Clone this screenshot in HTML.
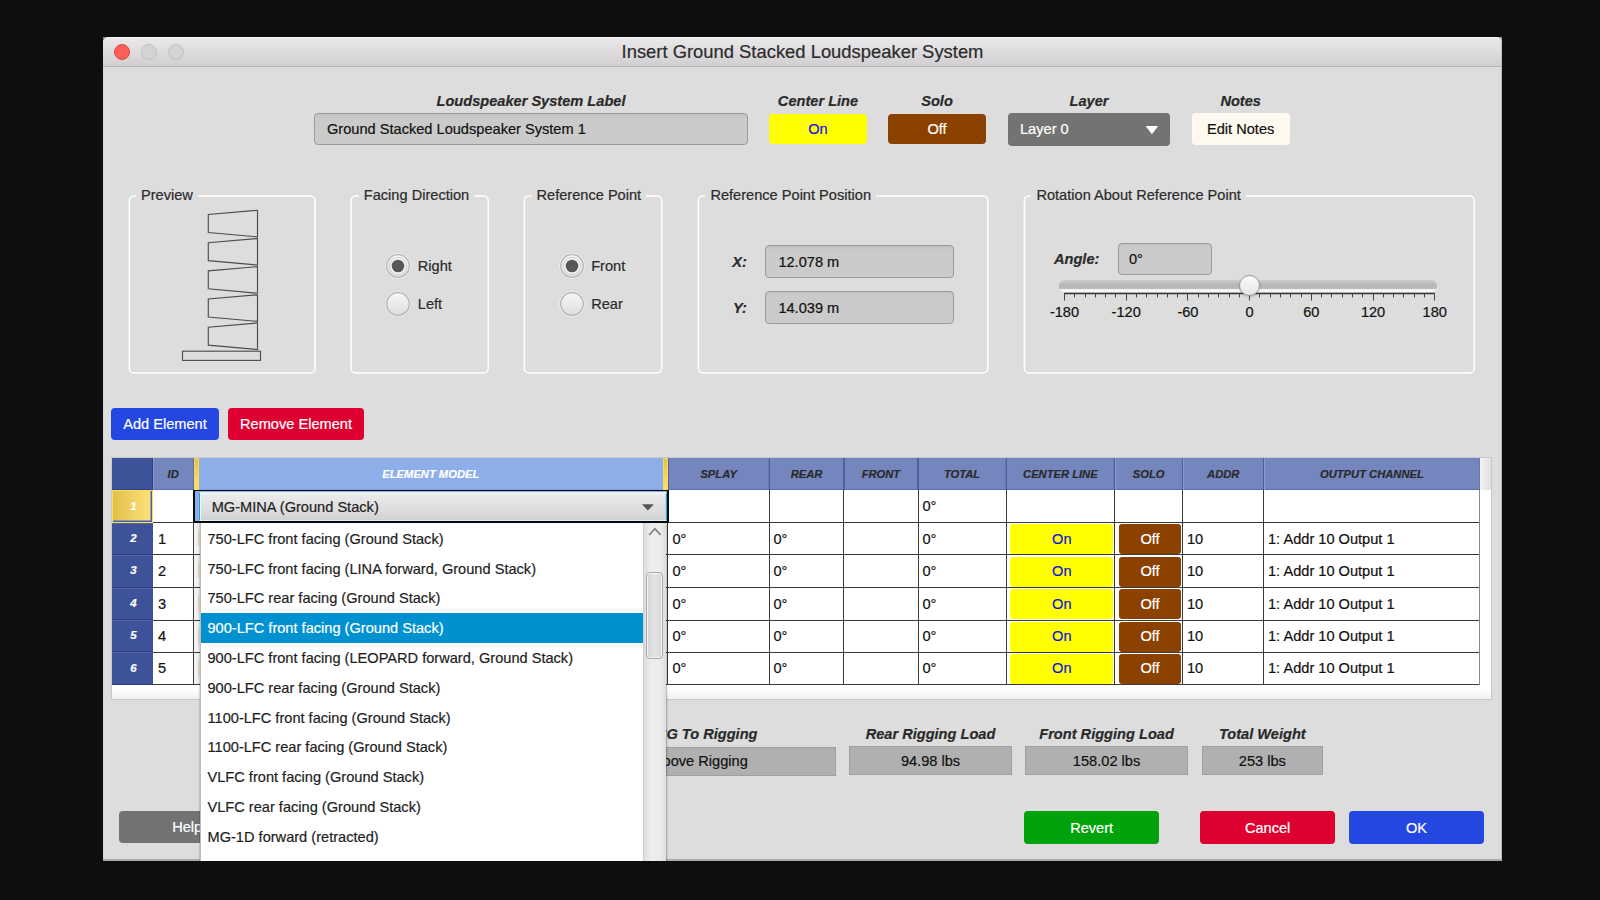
<!DOCTYPE html>
<html><head><meta charset="utf-8"><title>Insert Ground Stacked Loudspeaker System</title>
<style>
html,body{margin:0;padding:0;}
body{width:1600px;height:900px;background:#0e0e0e;position:relative;overflow:hidden;font-family:"Liberation Sans",sans-serif;color:#1a1a1a;}
.a{position:absolute;box-sizing:border-box;}
.t{line-height:1;white-space:pre;-webkit-text-stroke:0.2px currentColor;}
.bi{font-weight:bold;font-style:italic;color:#2a2a2a;}
</style></head><body>
<div class="a" style="left:1494px;top:37px;width:8px;height:8px;background:#9a9a9a;"></div>
<div class="a" style="left:103px;top:37px;width:8px;height:8px;background:#8a8a8a;"></div>
<div class="a" style="left:103px;top:37px;width:1399px;height:824px;background:#dddddd;border-radius:6px 6px 0 0;box-shadow:inset -1px 0 0 #b9b9b9, inset 0 -2px 1px #a9a9a9;"></div>
<div class="a" style="left:103px;top:37px;width:1399px;height:30px;background:linear-gradient(#ebe9eb,#d1cfd1);border-radius:6px 6px 0 0;border-bottom:1px solid #b3b3b3;box-shadow:inset 0 1px 0 #f4f3f4, inset -1px 0 0 #c0bfc0;"></div>
<div class="a" style="left:114px;top:44px;width:16px;height:16px;border-radius:50%;background:#fe5f57;border:1px solid #e0443e;"></div>
<div class="a" style="left:141px;top:44px;width:16px;height:16px;border-radius:50%;background:#d3d3d3;border:1px solid #c1c1c1;"></div>
<div class="a" style="left:168px;top:44px;width:16px;height:16px;border-radius:50%;background:#d3d3d3;border:1px solid #c1c1c1;"></div>
<div class="a t" style="left:502.50px;width:600px;text-align:center;top:43.41px;font-size:18.4px;color:#2b2b2b;">Insert Ground Stacked Loudspeaker System</div>
<div class="a t bi" style="left:381.00px;width:300px;text-align:center;top:93.63px;font-size:14.6px;">Loudspeaker System Label</div>
<div class="a t bi" style="left:718.00px;width:200px;text-align:center;top:93.63px;font-size:14.6px;">Center Line</div>
<div class="a t bi" style="left:837.00px;width:200px;text-align:center;top:93.63px;font-size:14.6px;">Solo</div>
<div class="a t bi" style="left:989.00px;width:200px;text-align:center;top:93.63px;font-size:14.6px;">Layer</div>
<div class="a t bi" style="left:1140.70px;width:200px;text-align:center;top:93.63px;font-size:14.6px;">Notes</div>
<div class="a" style="left:314px;top:113px;width:434px;height:32px;background:linear-gradient(#c2c2c2,#cacaca 4px,#cbcbcb);border:1px solid #9a9a9a;border-radius:4px;"></div>
<div class="a t" style="left:327.00px;top:121.78px;font-size:14.6px;color:#111;">Ground Stacked Loudspeaker System 1</div>
<div class="a" style="left:769px;top:114px;width:98px;height:30px;background:#ffff00;border-radius:4px;"></div>
<div class="a t" style="left:769.00px;width:98px;text-align:center;top:122.23px;font-size:14.6px;color:#1414e0;">On</div>
<div class="a" style="left:888px;top:114px;width:98px;height:30px;background:#8b4200;border-radius:4px;"></div>
<div class="a t" style="left:888.00px;width:98px;text-align:center;top:122.23px;font-size:14.6px;color:#fff;">Off</div>
<div class="a" style="left:1008px;top:113px;width:162px;height:33.30000000000001px;background:#737373;border-radius:4px;"></div>
<div class="a t" style="left:1020.00px;top:122.23px;font-size:14.6px;color:#fff;">Layer 0</div>
<svg class="a" style="left:1145px;top:124px" width="14" height="11"><polygon points="0.6,1.9 13.2,1.9 6.9,10.3" fill="#fff"/></svg>
<div class="a" style="left:1192px;top:113px;width:98px;height:32px;background:#fdf9ee;border-radius:4px;"></div>
<div class="a t" style="left:1191.70px;width:98px;text-align:center;top:122.23px;font-size:14.6px;color:#111;">Edit Notes</div>
<svg class="a" style="left:0;top:0" width="1600" height="900" fill="none" stroke="#ffffff" stroke-width="1.5"><rect x="129.3" y="196" width="185.7" height="176.9" rx="4.5"/><rect x="351.1" y="196" width="137.1" height="176.9" rx="4.5"/><rect x="524.3" y="196" width="137.4" height="176.9" rx="4.5"/><rect x="698.4" y="196" width="289.4" height="176.9" rx="4.5"/><rect x="1024.4" y="196" width="449.8" height="176.9" rx="4.5"/></svg>
<div class="a t" style="left:136.0px;top:187.63px;font-size:14.6px;padding:0 5px;background:#dddddd;color:#2b2b2b;">Preview</div>
<div class="a t" style="left:358.8px;top:187.63px;font-size:14.6px;padding:0 5px;background:#dddddd;color:#2b2b2b;">Facing Direction</div>
<div class="a t" style="left:531.5px;top:187.63px;font-size:14.6px;padding:0 5px;background:#dddddd;color:#2b2b2b;">Reference Point</div>
<div class="a t" style="left:705.4px;top:187.63px;font-size:14.6px;padding:0 5px;background:#dddddd;color:#2b2b2b;">Reference Point Position</div>
<div class="a t" style="left:1031.4px;top:187.63px;font-size:14.6px;padding:0 5px;background:#dddddd;color:#2b2b2b;">Rotation About Reference Point</div>
<svg class="a" style="left:0;top:0" width="1600" height="900" fill="none" stroke="#4e4e4e" stroke-width="1.15"><polygon points="257.5,210.30 257.5,236.90 208.3,232.50 208.3,214.50"/><polygon points="257.5,238.47 257.5,265.07 208.3,260.67 208.3,242.67"/><polygon points="257.5,266.64 257.5,293.24 208.3,288.84 208.3,270.84"/><polygon points="257.5,294.81 257.5,321.41 208.3,317.01 208.3,299.01"/><polygon points="257.5,322.98 257.5,349.58 208.3,345.18 208.3,327.18"/><rect x="182.5" y="351.2" width="78" height="9.2"/></svg>
<svg class="a" style="left:385.0px;top:252.60000000000002px" width="26" height="26"><defs><linearGradient id="rg398265" x1="0" y1="0" x2="0" y2="1"><stop offset="0" stop-color="#f7f7f7"/><stop offset="1" stop-color="#dedede"/></linearGradient></defs><circle cx="13" cy="13" r="12.3" fill="none" stroke="#f2f2f2" stroke-width="1"/><circle cx="13" cy="13" r="11.3" fill="url(#rg398265)" stroke="#b3b3b3" stroke-width="1.2"/><circle cx="13" cy="13" r="8.6" fill="#f4f4f4" stroke="#cfcfcf" stroke-width="1"/><circle cx="13" cy="13" r="6.3" fill="#575757"/></svg>
<svg class="a" style="left:385.0px;top:290.7px" width="26" height="26"><defs><linearGradient id="rg398303" x1="0" y1="0" x2="0" y2="1"><stop offset="0" stop-color="#f7f7f7"/><stop offset="1" stop-color="#dedede"/></linearGradient></defs><circle cx="13" cy="13" r="12.3" fill="none" stroke="#f2f2f2" stroke-width="1"/><circle cx="13" cy="13" r="11.3" fill="url(#rg398303)" stroke="#b3b3b3" stroke-width="1.2"/></svg>
<div class="a t" style="left:417.80px;top:259.13px;font-size:14.6px;color:#2b2b2b;">Right</div>
<div class="a t" style="left:417.80px;top:296.93px;font-size:14.6px;color:#2b2b2b;">Left</div>
<svg class="a" style="left:558.5px;top:252.60000000000002px" width="26" height="26"><defs><linearGradient id="rg571265" x1="0" y1="0" x2="0" y2="1"><stop offset="0" stop-color="#f7f7f7"/><stop offset="1" stop-color="#dedede"/></linearGradient></defs><circle cx="13" cy="13" r="12.3" fill="none" stroke="#f2f2f2" stroke-width="1"/><circle cx="13" cy="13" r="11.3" fill="url(#rg571265)" stroke="#b3b3b3" stroke-width="1.2"/><circle cx="13" cy="13" r="8.6" fill="#f4f4f4" stroke="#cfcfcf" stroke-width="1"/><circle cx="13" cy="13" r="6.3" fill="#575757"/></svg>
<svg class="a" style="left:558.5px;top:290.7px" width="26" height="26"><defs><linearGradient id="rg571303" x1="0" y1="0" x2="0" y2="1"><stop offset="0" stop-color="#f7f7f7"/><stop offset="1" stop-color="#dedede"/></linearGradient></defs><circle cx="13" cy="13" r="12.3" fill="none" stroke="#f2f2f2" stroke-width="1"/><circle cx="13" cy="13" r="11.3" fill="url(#rg571303)" stroke="#b3b3b3" stroke-width="1.2"/></svg>
<div class="a t" style="left:591.20px;top:259.13px;font-size:14.6px;color:#2b2b2b;">Front</div>
<div class="a t" style="left:591.20px;top:296.93px;font-size:14.6px;color:#2b2b2b;">Rear</div>
<div class="a t bi" style="left:732.20px;top:254.73px;font-size:14.6px;">X:</div>
<div class="a t bi" style="left:733.00px;top:300.73px;font-size:14.6px;">Y:</div>
<div class="a" style="left:765px;top:245px;width:188.5px;height:32.5px;background:linear-gradient(#c2c2c2,#cacaca 4px,#cbcbcb);border:1px solid #9a9a9a;border-radius:4px;"></div>
<div class="a" style="left:765px;top:291px;width:188.5px;height:32.5px;background:linear-gradient(#c2c2c2,#cacaca 4px,#cbcbcb);border:1px solid #9a9a9a;border-radius:4px;"></div>
<div class="a t" style="left:778.40px;top:254.73px;font-size:14.6px;color:#111;">12.078 m</div>
<div class="a t" style="left:778.40px;top:300.73px;font-size:14.6px;color:#111;">14.039 m</div>
<div class="a t bi" style="left:1054.00px;top:252.33px;font-size:14.6px;">Angle:</div>
<div class="a" style="left:1117.5px;top:243px;width:94.5px;height:32px;background:linear-gradient(#c2c2c2,#cacaca 4px,#cbcbcb);border:1px solid #9a9a9a;border-radius:4px;"></div>
<div class="a t" style="left:1129.00px;top:252.33px;font-size:14.6px;color:#111;">0°</div>
<div class="a" style="left:1059px;top:279.5px;width:378px;height:12.0px;background:linear-gradient(#cdcdcd,#b9b9b9 35%,#b6b6b6 70%,#f4f4f4 80%,#f8f8f8);border-radius:6px;"></div>
<svg class="a" style="left:0;top:0" width="1600" height="900" stroke="#444" stroke-width="1"><line x1="1064.5" y1="293.6" x2="1434.8" y2="293.6" stroke-width="1.5" stroke="#333"/><line x1="1064.5" y1="293" x2="1064.5" y2="300.5"/><line x1="1074.5" y1="293" x2="1074.5" y2="297.5"/><line x1="1085.5" y1="293" x2="1085.5" y2="297.5"/><line x1="1095.5" y1="293" x2="1095.5" y2="297.5"/><line x1="1105.5" y1="293" x2="1105.5" y2="297.5"/><line x1="1115.5" y1="293" x2="1115.5" y2="297.5"/><line x1="1126.5" y1="293" x2="1126.5" y2="300.5"/><line x1="1136.5" y1="293" x2="1136.5" y2="297.5"/><line x1="1146.5" y1="293" x2="1146.5" y2="297.5"/><line x1="1157.5" y1="293" x2="1157.5" y2="297.5"/><line x1="1167.5" y1="293" x2="1167.5" y2="297.5"/><line x1="1177.5" y1="293" x2="1177.5" y2="297.5"/><line x1="1187.5" y1="293" x2="1187.5" y2="300.5"/><line x1="1198.5" y1="293" x2="1198.5" y2="297.5"/><line x1="1208.5" y1="293" x2="1208.5" y2="297.5"/><line x1="1218.5" y1="293" x2="1218.5" y2="297.5"/><line x1="1229.5" y1="293" x2="1229.5" y2="297.5"/><line x1="1239.5" y1="293" x2="1239.5" y2="297.5"/><line x1="1249.5" y1="293" x2="1249.5" y2="300.5"/><line x1="1259.5" y1="293" x2="1259.5" y2="297.5"/><line x1="1270.5" y1="293" x2="1270.5" y2="297.5"/><line x1="1280.5" y1="293" x2="1280.5" y2="297.5"/><line x1="1290.5" y1="293" x2="1290.5" y2="297.5"/><line x1="1301.5" y1="293" x2="1301.5" y2="297.5"/><line x1="1311.5" y1="293" x2="1311.5" y2="300.5"/><line x1="1321.5" y1="293" x2="1321.5" y2="297.5"/><line x1="1331.5" y1="293" x2="1331.5" y2="297.5"/><line x1="1342.5" y1="293" x2="1342.5" y2="297.5"/><line x1="1352.5" y1="293" x2="1352.5" y2="297.5"/><line x1="1362.5" y1="293" x2="1362.5" y2="297.5"/><line x1="1373.5" y1="293" x2="1373.5" y2="300.5"/><line x1="1383.5" y1="293" x2="1383.5" y2="297.5"/><line x1="1393.5" y1="293" x2="1393.5" y2="297.5"/><line x1="1403.5" y1="293" x2="1403.5" y2="297.5"/><line x1="1414.5" y1="293" x2="1414.5" y2="297.5"/><line x1="1424.5" y1="293" x2="1424.5" y2="297.5"/><line x1="1434.5" y1="293" x2="1434.5" y2="300.5"/></svg>
<div class="a t" style="left:1034.50px;width:60px;text-align:center;top:305.23px;font-size:14.6px;color:#111;">-180</div>
<div class="a t" style="left:1096.22px;width:60px;text-align:center;top:305.23px;font-size:14.6px;color:#111;">-120</div>
<div class="a t" style="left:1157.93px;width:60px;text-align:center;top:305.23px;font-size:14.6px;color:#111;">-60</div>
<div class="a t" style="left:1219.65px;width:60px;text-align:center;top:305.23px;font-size:14.6px;color:#111;">0</div>
<div class="a t" style="left:1281.37px;width:60px;text-align:center;top:305.23px;font-size:14.6px;color:#111;">60</div>
<div class="a t" style="left:1343.08px;width:60px;text-align:center;top:305.23px;font-size:14.6px;color:#111;">120</div>
<div class="a t" style="left:1404.80px;width:60px;text-align:center;top:305.23px;font-size:14.6px;color:#111;">180</div>
<div class="a" style="left:1238.8px;top:275px;width:21.0px;height:21px;border-radius:50%;background:linear-gradient(#fbfbfb,#e4e4e4);border:1px solid #999;box-shadow:0 1px 2px rgba(0,0,0,0.18);"></div>
<div class="a" style="left:111px;top:408px;width:108px;height:32px;background:#2347e0;border-radius:4px;"></div>
<div class="a t" style="left:111.00px;width:108px;text-align:center;top:417.23px;font-size:14.6px;color:#fff;">Add Element</div>
<div class="a" style="left:228px;top:408px;width:136px;height:32px;background:#de0030;border-radius:4px;"></div>
<div class="a t" style="left:228.00px;width:136px;text-align:center;top:417.23px;font-size:14.6px;color:#fff;">Remove Element</div>
<div class="a" style="left:119.3px;top:811px;width:140.7px;height:32px;background:#737373;border-radius:4px;"></div>
<div class="a t" style="left:172.20px;top:820.23px;font-size:14.6px;color:#fff;">Help</div>
<div class="a t bi" style="left:357.50px;width:400px;text-align:right;top:727.43px;font-size:14.6px;">Stack Position CG To Rigging</div>
<div class="a" style="left:560px;top:746.5px;width:275.5px;height:29.0px;background:#b0b0b0;border:1px solid #a0a0a0;"></div>
<div class="a t" style="left:447.80px;width:300px;text-align:right;top:753.93px;font-size:14.6px;color:#111;">Above Rigging</div>
<div class="a t bi" style="left:780.50px;width:300px;text-align:center;top:727.43px;font-size:14.6px;">Rear Rigging Load</div>
<div class="a" style="left:849.4px;top:746.3px;width:162.20000000000005px;height:29.0px;background:#b0b0b0;border:1px solid #a0a0a0;"></div>
<div class="a t" style="left:830.50px;width:200px;text-align:center;top:753.93px;font-size:14.6px;color:#111;">94.98 lbs</div>
<div class="a t bi" style="left:956.55px;width:300px;text-align:center;top:727.43px;font-size:14.6px;">Front Rigging Load</div>
<div class="a" style="left:1025.3px;top:746.3px;width:162.5px;height:29.0px;background:#b0b0b0;border:1px solid #a0a0a0;"></div>
<div class="a t" style="left:1006.55px;width:200px;text-align:center;top:753.93px;font-size:14.6px;color:#111;">158.02 lbs</div>
<div class="a t bi" style="left:1112.35px;width:300px;text-align:center;top:727.43px;font-size:14.6px;">Total Weight</div>
<div class="a" style="left:1201.6px;top:746.3px;width:121.5px;height:29.0px;background:#b0b0b0;border:1px solid #a0a0a0;"></div>
<div class="a t" style="left:1162.35px;width:200px;text-align:center;top:753.93px;font-size:14.6px;color:#111;">253 lbs</div>
<div class="a" style="left:1023.8px;top:811px;width:135.70000000000005px;height:32.60000000000002px;background:#00a30b;border-radius:4px;"></div>
<div class="a t" style="left:991.65px;width:200px;text-align:center;top:820.63px;font-size:14.6px;color:#fff;">Revert</div>
<div class="a" style="left:1199.9px;top:811px;width:135.39999999999986px;height:32.60000000000002px;background:#de0030;border-radius:4px;"></div>
<div class="a t" style="left:1167.60px;width:200px;text-align:center;top:820.63px;font-size:14.6px;color:#fff;">Cancel</div>
<div class="a" style="left:1349px;top:811px;width:135.0999999999999px;height:32.60000000000002px;background:#2347e0;border-radius:4px;"></div>
<div class="a t" style="left:1316.55px;width:200px;text-align:center;top:820.63px;font-size:14.6px;color:#fff;">OK</div>
<div class="a" style="left:111px;top:457px;width:1381px;height:243px;background:linear-gradient(#fff 96%,#f0f0f0);border:1px solid #c9c9c9;"></div>
<div class="a" style="left:112px;top:458px;width:40.69999999999999px;height:32px;background:#3e5299;box-shadow:inset -1px 0 0 #2d3f86, inset 0 -1px 0 #2d3f86;"></div>
<div class="a" style="left:152.7px;top:458px;width:40.900000000000006px;height:32px;background:#7586bf;box-shadow:inset 1px 0 0 #8a9ad0, inset -1px 0 0 #6677b4, inset 0 -1px 0 #5c6cab;"></div>
<div class="a" style="left:192.6px;top:458px;width:1.4000000000000057px;height:32px;background:#5a6db0;"></div>
<div class="a" style="left:194px;top:458px;width:470px;height:32px;background:#8eaeea;box-shadow:inset 0 -1px 0 #7f9edc;"></div>
<div class="a" style="left:193.9px;top:458px;width:5.099999999999994px;height:32px;background:linear-gradient(#e6c14a,#fde16c);border:1px solid #f7dc5a;"></div>
<div class="a" style="left:663px;top:458px;width:5.2000000000000455px;height:32px;background:linear-gradient(#e6c14a,#fde16c);border:1px solid #f7dc5a;"></div>
<div class="a" style="left:668px;top:458px;width:101.29999999999995px;height:32px;background:#7586bf;box-shadow:inset 1px 0 0 #8a9ad0, inset -1px 0 0 #6677b4, inset 0 -1px 0 #5c6cab;"></div>
<div class="a" style="left:769.3px;top:458px;width:74.60000000000002px;height:32px;background:#7586bf;box-shadow:inset 1px 0 0 #8a9ad0, inset -1px 0 0 #6677b4, inset 0 -1px 0 #5c6cab;"></div>
<div class="a" style="left:843.9px;top:458px;width:74.0px;height:32px;background:#7586bf;box-shadow:inset 1px 0 0 #8a9ad0, inset -1px 0 0 #6677b4, inset 0 -1px 0 #5c6cab;"></div>
<div class="a" style="left:917.9px;top:458px;width:88.30000000000007px;height:32px;background:#7586bf;box-shadow:inset 1px 0 0 #8a9ad0, inset -1px 0 0 #6677b4, inset 0 -1px 0 #5c6cab;"></div>
<div class="a" style="left:1006.2px;top:458px;width:108.29999999999995px;height:32px;background:#7586bf;box-shadow:inset 1px 0 0 #8a9ad0, inset -1px 0 0 #6677b4, inset 0 -1px 0 #5c6cab;"></div>
<div class="a" style="left:1114.5px;top:458px;width:68.20000000000005px;height:32px;background:#7586bf;box-shadow:inset 1px 0 0 #8a9ad0, inset -1px 0 0 #6677b4, inset 0 -1px 0 #5c6cab;"></div>
<div class="a" style="left:1182.7px;top:458px;width:81.04999999999995px;height:32px;background:#7586bf;box-shadow:inset 1px 0 0 #8a9ad0, inset -1px 0 0 #6677b4, inset 0 -1px 0 #5c6cab;"></div>
<div class="a" style="left:1263.75px;top:458px;width:216.25px;height:32px;background:#7586bf;box-shadow:inset 1px 0 0 #8a9ad0, inset -1px 0 0 #6677b4, inset 0 -1px 0 #5c6cab;"></div>
<div class="a" style="left:667.5px;top:458px;width:1.2000000000000455px;height:32px;background:#4f5f9e;"></div>
<div class="a" style="left:768.8px;top:458px;width:1.2000000000000455px;height:32px;background:#4f5f9e;"></div>
<div class="a" style="left:843.4px;top:458px;width:1.2000000000000455px;height:32px;background:#4f5f9e;"></div>
<div class="a" style="left:917.4px;top:458px;width:1.2000000000000455px;height:32px;background:#4f5f9e;"></div>
<div class="a" style="left:1005.7px;top:458px;width:1.2000000000000455px;height:32px;background:#4f5f9e;"></div>
<div class="a" style="left:1114.0px;top:458px;width:1.2000000000000455px;height:32px;background:#4f5f9e;"></div>
<div class="a" style="left:1182.2px;top:458px;width:1.2000000000000455px;height:32px;background:#4f5f9e;"></div>
<div class="a" style="left:1263.25px;top:458px;width:1.2000000000000455px;height:32px;background:#4f5f9e;"></div>
<div class="a" style="left:1480px;top:458px;width:11px;height:32px;background:linear-gradient(90deg,#f2f2f2,#e0e0e0);"></div>
<div class="a t" style="left:73.15px;width:200px;text-align:center;top:468.82px;font-size:11.2px;font-weight:bold;font-style:italic;color:#2a2a2a;">ID</div>
<div class="a t" style="left:330.80px;width:200px;text-align:center;top:468.82px;font-size:11.2px;font-weight:bold;font-style:italic;color:#ffffff;">ELEMENT MODEL</div>
<div class="a t" style="left:618.65px;width:200px;text-align:center;top:468.82px;font-size:11.2px;font-weight:bold;font-style:italic;color:#2a2a2a;">SPLAY</div>
<div class="a t" style="left:706.60px;width:200px;text-align:center;top:468.82px;font-size:11.2px;font-weight:bold;font-style:italic;color:#2a2a2a;">REAR</div>
<div class="a t" style="left:780.90px;width:200px;text-align:center;top:468.82px;font-size:11.2px;font-weight:bold;font-style:italic;color:#2a2a2a;">FRONT</div>
<div class="a t" style="left:862.05px;width:200px;text-align:center;top:468.82px;font-size:11.2px;font-weight:bold;font-style:italic;color:#2a2a2a;">TOTAL</div>
<div class="a t" style="left:960.35px;width:200px;text-align:center;top:468.82px;font-size:11.2px;font-weight:bold;font-style:italic;color:#2a2a2a;">CENTER LINE</div>
<div class="a t" style="left:1048.60px;width:200px;text-align:center;top:468.82px;font-size:11.2px;font-weight:bold;font-style:italic;color:#2a2a2a;">SOLO</div>
<div class="a t" style="left:1123.22px;width:200px;text-align:center;top:468.82px;font-size:11.2px;font-weight:bold;font-style:italic;color:#2a2a2a;">ADDR</div>
<div class="a t" style="left:1271.88px;width:200px;text-align:center;top:468.82px;font-size:11.2px;font-weight:bold;font-style:italic;color:#2a2a2a;">OUTPUT CHANNEL</div>
<div class="a" style="left:112px;top:490.4px;width:41px;height:32.39999999999998px;background:linear-gradient(90deg,#e3bf4c,#fde27a);border:1.5px solid #fbe05a;box-shadow:inset -1.5px -1.5px 0 #4760b0;"></div>
<div class="a t" style="left:113.50px;width:40px;text-align:center;top:500.57px;font-size:11.5px;font-weight:bold;font-style:italic;color:#fff;">1</div>
<div class="a" style="left:112px;top:522.8px;width:40.69999999999999px;height:32.39999999999998px;background:#3e5299;box-shadow:inset 0 1px 0 #5065aa, inset 0 -1px 0 #2c3e88;"></div>
<div class="a t" style="left:113.50px;width:40px;text-align:center;top:532.97px;font-size:11.5px;font-weight:bold;font-style:italic;color:#fff;">2</div>
<div class="a" style="left:112px;top:555.1999999999999px;width:40.69999999999999px;height:32.39999999999998px;background:#3e5299;box-shadow:inset 0 1px 0 #5065aa, inset 0 -1px 0 #2c3e88;"></div>
<div class="a t" style="left:113.50px;width:40px;text-align:center;top:565.37px;font-size:11.5px;font-weight:bold;font-style:italic;color:#fff;">3</div>
<div class="a" style="left:112px;top:587.5999999999999px;width:40.69999999999999px;height:32.40000000000009px;background:#3e5299;box-shadow:inset 0 1px 0 #5065aa, inset 0 -1px 0 #2c3e88;"></div>
<div class="a t" style="left:113.50px;width:40px;text-align:center;top:597.77px;font-size:11.5px;font-weight:bold;font-style:italic;color:#fff;">4</div>
<div class="a" style="left:112px;top:620.0px;width:40.69999999999999px;height:32.39999999999998px;background:#3e5299;box-shadow:inset 0 1px 0 #5065aa, inset 0 -1px 0 #2c3e88;"></div>
<div class="a t" style="left:113.50px;width:40px;text-align:center;top:630.17px;font-size:11.5px;font-weight:bold;font-style:italic;color:#fff;">5</div>
<div class="a" style="left:112px;top:652.4px;width:40.69999999999999px;height:32.39999999999998px;background:#3e5299;box-shadow:inset 0 1px 0 #5065aa, inset 0 -1px 0 #2c3e88;"></div>
<div class="a t" style="left:113.50px;width:40px;text-align:center;top:662.57px;font-size:11.5px;font-weight:bold;font-style:italic;color:#fff;">6</div>
<div class="a" style="left:152.7px;top:522px;width:1327.3px;height:1px;background:#3a3a3a;"></div>
<div class="a" style="left:152.7px;top:554px;width:1327.3px;height:1px;background:#3a3a3a;"></div>
<div class="a" style="left:152.7px;top:587px;width:1327.3px;height:1px;background:#3a3a3a;"></div>
<div class="a" style="left:152.7px;top:620px;width:1327.3px;height:1px;background:#3a3a3a;"></div>
<div class="a" style="left:152.7px;top:652px;width:1327.3px;height:1px;background:#3a3a3a;"></div>
<div class="a" style="left:152.7px;top:684px;width:1327.3px;height:1px;background:#3a3a3a;"></div>
<div class="a" style="left:193px;top:490px;width:1px;height:195px;background:#3a3a3a;"></div>
<div class="a" style="left:667px;top:490px;width:1px;height:195px;background:#3a3a3a;"></div>
<div class="a" style="left:769px;top:490px;width:1px;height:195px;background:#3a3a3a;"></div>
<div class="a" style="left:843px;top:490px;width:1px;height:195px;background:#3a3a3a;"></div>
<div class="a" style="left:918px;top:490px;width:1px;height:195px;background:#3a3a3a;"></div>
<div class="a" style="left:1006px;top:490px;width:1px;height:195px;background:#3a3a3a;"></div>
<div class="a" style="left:1114px;top:490px;width:1px;height:195px;background:#3a3a3a;"></div>
<div class="a" style="left:1182px;top:490px;width:1px;height:195px;background:#3a3a3a;"></div>
<div class="a" style="left:1263px;top:490px;width:1px;height:195px;background:#3a3a3a;"></div>
<div class="a" style="left:1479px;top:490px;width:1px;height:195px;background:#8a8a8a;"></div>
<div class="a t" style="left:922.50px;top:499.33px;font-size:14.6px;color:#111;">0°</div>
<div class="a t" style="left:158.00px;top:531.73px;font-size:14.6px;color:#111;">1</div>
<div class="a t" style="left:672.50px;top:531.73px;font-size:14.6px;color:#111;">0°</div>
<div class="a t" style="left:773.50px;top:531.73px;font-size:14.6px;color:#111;">0°</div>
<div class="a t" style="left:922.50px;top:531.73px;font-size:14.6px;color:#111;">0°</div>
<div class="a" style="left:1010.4px;top:524.4px;width:102.89999999999998px;height:30.0px;background:#ffff00;border-radius:3px;"></div>
<div class="a t" style="left:1011.80px;width:100px;text-align:center;top:531.73px;font-size:14.6px;color:#1414e0;">On</div>
<div class="a" style="left:1119px;top:524.4px;width:62px;height:30.0px;background:#8b4200;border-radius:3px;"></div>
<div class="a t" style="left:1120.00px;width:60px;text-align:center;top:531.73px;font-size:14.6px;color:#fff;">Off</div>
<div class="a t" style="left:1187.00px;top:531.73px;font-size:14.6px;color:#111;">10</div>
<div class="a t" style="left:1268.00px;top:531.73px;font-size:14.6px;color:#111;">1: Addr 10 Output 1</div>
<div class="a t" style="left:158.00px;top:564.13px;font-size:14.6px;color:#111;">2</div>
<div class="a t" style="left:672.50px;top:564.13px;font-size:14.6px;color:#111;">0°</div>
<div class="a t" style="left:773.50px;top:564.13px;font-size:14.6px;color:#111;">0°</div>
<div class="a t" style="left:922.50px;top:564.13px;font-size:14.6px;color:#111;">0°</div>
<div class="a" style="left:1010.4px;top:556.8px;width:102.89999999999998px;height:30.0px;background:#ffff00;border-radius:3px;"></div>
<div class="a t" style="left:1011.80px;width:100px;text-align:center;top:564.13px;font-size:14.6px;color:#1414e0;">On</div>
<div class="a" style="left:1119px;top:556.8px;width:62px;height:30.0px;background:#8b4200;border-radius:3px;"></div>
<div class="a t" style="left:1120.00px;width:60px;text-align:center;top:564.13px;font-size:14.6px;color:#fff;">Off</div>
<div class="a t" style="left:1187.00px;top:564.13px;font-size:14.6px;color:#111;">10</div>
<div class="a t" style="left:1268.00px;top:564.13px;font-size:14.6px;color:#111;">1: Addr 10 Output 1</div>
<div class="a t" style="left:158.00px;top:596.53px;font-size:14.6px;color:#111;">3</div>
<div class="a t" style="left:672.50px;top:596.53px;font-size:14.6px;color:#111;">0°</div>
<div class="a t" style="left:773.50px;top:596.53px;font-size:14.6px;color:#111;">0°</div>
<div class="a t" style="left:922.50px;top:596.53px;font-size:14.6px;color:#111;">0°</div>
<div class="a" style="left:1010.4px;top:589.1999999999999px;width:102.89999999999998px;height:30.0px;background:#ffff00;border-radius:3px;"></div>
<div class="a t" style="left:1011.80px;width:100px;text-align:center;top:596.53px;font-size:14.6px;color:#1414e0;">On</div>
<div class="a" style="left:1119px;top:589.1999999999999px;width:62px;height:30.0px;background:#8b4200;border-radius:3px;"></div>
<div class="a t" style="left:1120.00px;width:60px;text-align:center;top:596.53px;font-size:14.6px;color:#fff;">Off</div>
<div class="a t" style="left:1187.00px;top:596.53px;font-size:14.6px;color:#111;">10</div>
<div class="a t" style="left:1268.00px;top:596.53px;font-size:14.6px;color:#111;">1: Addr 10 Output 1</div>
<div class="a t" style="left:158.00px;top:628.93px;font-size:14.6px;color:#111;">4</div>
<div class="a t" style="left:672.50px;top:628.93px;font-size:14.6px;color:#111;">0°</div>
<div class="a t" style="left:773.50px;top:628.93px;font-size:14.6px;color:#111;">0°</div>
<div class="a t" style="left:922.50px;top:628.93px;font-size:14.6px;color:#111;">0°</div>
<div class="a" style="left:1010.4px;top:621.6px;width:102.89999999999998px;height:30.0px;background:#ffff00;border-radius:3px;"></div>
<div class="a t" style="left:1011.80px;width:100px;text-align:center;top:628.93px;font-size:14.6px;color:#1414e0;">On</div>
<div class="a" style="left:1119px;top:621.6px;width:62px;height:30.0px;background:#8b4200;border-radius:3px;"></div>
<div class="a t" style="left:1120.00px;width:60px;text-align:center;top:628.93px;font-size:14.6px;color:#fff;">Off</div>
<div class="a t" style="left:1187.00px;top:628.93px;font-size:14.6px;color:#111;">10</div>
<div class="a t" style="left:1268.00px;top:628.93px;font-size:14.6px;color:#111;">1: Addr 10 Output 1</div>
<div class="a t" style="left:158.00px;top:661.33px;font-size:14.6px;color:#111;">5</div>
<div class="a t" style="left:672.50px;top:661.33px;font-size:14.6px;color:#111;">0°</div>
<div class="a t" style="left:773.50px;top:661.33px;font-size:14.6px;color:#111;">0°</div>
<div class="a t" style="left:922.50px;top:661.33px;font-size:14.6px;color:#111;">0°</div>
<div class="a" style="left:1010.4px;top:654.0px;width:102.89999999999998px;height:30.0px;background:#ffff00;border-radius:3px;"></div>
<div class="a t" style="left:1011.80px;width:100px;text-align:center;top:661.33px;font-size:14.6px;color:#1414e0;">On</div>
<div class="a" style="left:1119px;top:654.0px;width:62px;height:30.0px;background:#8b4200;border-radius:3px;"></div>
<div class="a t" style="left:1120.00px;width:60px;text-align:center;top:661.33px;font-size:14.6px;color:#fff;">Off</div>
<div class="a t" style="left:1187.00px;top:661.33px;font-size:14.6px;color:#111;">10</div>
<div class="a t" style="left:1268.00px;top:661.33px;font-size:14.6px;color:#111;">1: Addr 10 Output 1</div>
<div class="a" style="left:194px;top:523px;width:5.5px;height:31px;background:linear-gradient(90deg,#f6f6f6,#e9e9e9);"></div>
<div class="a" style="left:197.8px;top:531px;width:1.0px;height:15px;background:#e8c9a0;"></div>
<div class="a" style="left:194px;top:555px;width:5.5px;height:32px;background:linear-gradient(90deg,#f6f6f6,#e9e9e9);"></div>
<div class="a" style="left:197.8px;top:563px;width:1.0px;height:15px;background:#e8c9a0;"></div>
<div class="a" style="left:194px;top:588px;width:5.5px;height:32px;background:linear-gradient(90deg,#f6f6f6,#e9e9e9);"></div>
<div class="a" style="left:197.8px;top:596px;width:1.0px;height:15px;background:#e8c9a0;"></div>
<div class="a" style="left:194px;top:621px;width:5.5px;height:31px;background:linear-gradient(90deg,#f6f6f6,#e9e9e9);"></div>
<div class="a" style="left:197.8px;top:629px;width:1.0px;height:15px;background:#e8c9a0;"></div>
<div class="a" style="left:194px;top:653px;width:5.5px;height:31px;background:linear-gradient(90deg,#f6f6f6,#e9e9e9);"></div>
<div class="a" style="left:197.8px;top:661px;width:1.0px;height:15px;background:#e8c9a0;"></div>
<div class="a" style="left:193px;top:490px;width:475.6px;height:33.299999999999955px;border-style:solid;border-color:#0a0a0a;border-width:1.5px 2px 2px 2px;background:#8eaeea;"></div>
<div class="a" style="left:199px;top:491.5px;width:467.6px;height:29.799999999999955px;border-style:solid;border-color:#d6f2fb #12a8e4;border-width:1.5px 1.6px;background:linear-gradient(#ececec,#dedede 60%,#d2d2d2);box-shadow:inset 1px 1px 0 #f2f8fa, inset -1px -1px 0 #c9d3d6;"></div>
<div class="a t" style="left:211.70px;top:499.73px;font-size:14.6px;color:#222;">MG-MINA (Ground Stack)</div>
<svg class="a" style="left:642px;top:503.5px" width="12" height="7"><polygon points="0,0.2 11.8,0.2 5.9,6.6" fill="#555"/></svg>
<div class="a" style="left:199.5px;top:523.4px;width:466.5px;height:337.6px;background:#ffffff;border-left:1px solid #bdbdbd;box-shadow:-1px 0 1px rgba(0,0,0,0.12), 1px 0 1.5px rgba(0,0,0,0.3);"></div>
<div class="a t" style="left:207.50px;top:531.73px;font-size:14.6px;color:#1e1e1e;">750-LFC front facing (Ground Stack)</div>
<div class="a t" style="left:207.50px;top:561.53px;font-size:14.6px;color:#1e1e1e;">750-LFC front facing (LINA forward, Ground Stack)</div>
<div class="a t" style="left:207.50px;top:591.33px;font-size:14.6px;color:#1e1e1e;">750-LFC rear facing (Ground Stack)</div>
<div class="a" style="left:200.5px;top:613.4px;width:443.4px;height:29.399999999999977px;background:#0092d0;"></div>
<div class="a t" style="left:207.50px;top:621.13px;font-size:14.6px;color:#fff;">900-LFC front facing (Ground Stack)</div>
<div class="a t" style="left:207.50px;top:650.93px;font-size:14.6px;color:#1e1e1e;">900-LFC front facing (LEOPARD forward, Ground Stack)</div>
<div class="a t" style="left:207.50px;top:680.73px;font-size:14.6px;color:#1e1e1e;">900-LFC rear facing (Ground Stack)</div>
<div class="a t" style="left:207.50px;top:710.53px;font-size:14.6px;color:#1e1e1e;">1100-LFC front facing (Ground Stack)</div>
<div class="a t" style="left:207.50px;top:740.33px;font-size:14.6px;color:#1e1e1e;">1100-LFC rear facing (Ground Stack)</div>
<div class="a t" style="left:207.50px;top:770.13px;font-size:14.6px;color:#1e1e1e;">VLFC front facing (Ground Stack)</div>
<div class="a t" style="left:207.50px;top:799.93px;font-size:14.6px;color:#1e1e1e;">VLFC rear facing (Ground Stack)</div>
<div class="a t" style="left:207.50px;top:829.73px;font-size:14.6px;color:#1e1e1e;">MG-1D forward (retracted)</div>
<div class="a" style="left:643.4px;top:523.4px;width:22.600000000000023px;height:337.6px;background:linear-gradient(90deg,#dcdcdc,#ededed 30%,#ececec 70%,#dedede);border-left:1px solid #d0d0d0;"></div>
<svg class="a" style="left:648px;top:527px" width="14" height="10"><polyline points="1.2,8 6.9,1.8 12.6,8" fill="none" stroke="#7a7a7a" stroke-width="1.6"/></svg>
<div class="a" style="left:646.3px;top:571.6px;width:16.600000000000023px;height:87.19999999999993px;background:linear-gradient(90deg,#d2d2d2,#e4e4e4 50%,#d6d6d6);border:1px solid #a9a9a9;border-radius:4px;box-shadow:inset 0 0 0 1px #f4f4f4;"></div>
</body></html>
